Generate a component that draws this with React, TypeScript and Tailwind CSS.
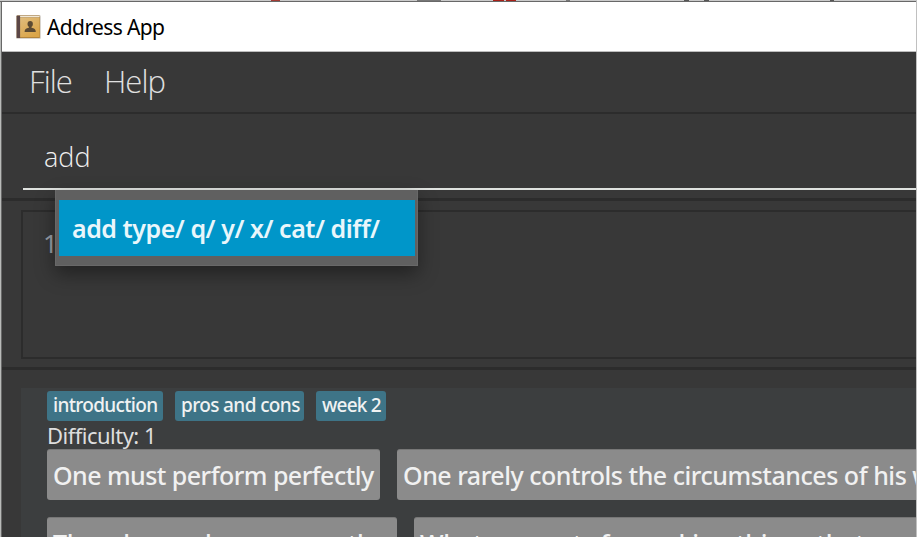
import React from "react";

function BookIcon() {
  return (
    <svg className="block h-6 w-[25px]" viewBox="0 0 25 24">
      <defs>
        <linearGradient id="cover" x1="0" y1="0" x2="0.6" y2="1">
          <stop offset="0" stopColor="#e0bd7e" />
          <stop offset="1" stopColor="#dba548" />
        </linearGradient>
      </defs>
      <rect x="0" y="0" width="25" height="24" rx="1.5" fill="#d9d5cf" />
      <rect x="0.7" y="0.5" width="23.3" height="22.5" rx="0.8" fill="#a97c38" />
      <rect x="4" y="1" width="19.6" height="1.4" fill="#f1e8d6" />
      <rect x="4" y="2.8" width="19.6" height="19.4" fill="url(#cover)" />
      <rect x="0.7" y="0.7" width="3.4" height="22.3" fill="#5b4646" />
      <ellipse cx="14.2" cy="9" rx="2.7" ry="3" fill="#5b4a33" />
      <path d="M12.9 10.5h2.6v2.3c2.9.7 4.3 1.4 4.3 4.200H8.600c0-2.800 1.400-3.500 4.300-4.200z" fill="#5b4a33" />
    </svg>
  );
}

function Tag({ children, className }: { children: React.ReactNode; className: string }) {
  return (
    <span className={`h-[30px] shrink-0 rounded-[3px] bg-[#3e7487] pl-[6px] text-[19px] font-medium leading-[29px] text-[#f0f2f2] ${className}`}>
      {children}
    </span>
  );
}

function Answer({ children, className }: { children: React.ReactNode; className: string }) {
  return (
    <div className={`h-[51px] shrink-0 rounded-[3px] border-t border-[#777] bg-[#8b8b8b] pl-[6px] text-[25px] font-medium leading-[51px] text-[#f1f1f1] ${className}`}>
      {children}
    </div>
  );
}

export default function App() {
  return (
    <div className="flex h-[537px] w-[917px] flex-col overflow-hidden whitespace-nowrap border-r border-[#c0c0c0] bg-[#383838] font-['Noto_Sans','Open_Sans',sans-serif]">
      <div className="flex h-[2px] shrink-0 border-b border-[#686868] bg-[#cacaca]">
        <i className="ml-[271px] h-px w-[9px] bg-[#a33c35]" />
        <i className="ml-[137px] h-px w-[24px] bg-[#777]" />
        <i className="ml-[52px] h-px w-[11px] bg-[#a82018]" />
        <i className="ml-[2px] h-px w-[10px] bg-[#a82018]" />
        <i className="ml-[50px] h-px w-[4px] bg-[#777]" />
        <i className="ml-[114px] h-px w-[5px] bg-[#555]" />
        <i className="ml-[15px] h-px w-[5px] bg-[#555]" />
        <i className="ml-[121px] h-px w-[4px] bg-[#555]" />
      </div>
      <div className="flex min-h-0 flex-1 border-l border-[#b9bbb9]">
        <div className="flex w-full flex-col border-l border-[#686868]">
          <header className="flex h-[50px] shrink-0 items-center border-b border-[#bdbdbd] bg-white pl-[14px] text-black">
            <BookIcon />
            <span className="ml-[6px] mt-[3px] text-[21px] tracking-[-0.62px]">Address App</span>
          </header>
          <nav className="flex h-[62px] shrink-0 items-center border-b-2 border-[#2c2c2c] pb-[2px] pl-[27px] font-['Open_Sans'] text-[31px] font-light tracking-[-0.95px] text-[#e0e0e0]">
            <span className="w-[75px]">File</span>
            <span>Help</span>
          </nav>
          <section className="relative z-10 h-[84px] shrink-0 pl-[21px]">
            <div className="h-[76px] border-b-2 border-[#dfe2df] pl-[21px] pt-[19px] font-['Open_Sans'] text-[27px] font-light leading-[48px] text-[#f0f0f0]">
              add
            </div>
            <div className="absolute left-[53px] top-[76px] h-[76px] w-[363px] border border-t-0 border-[#686868] bg-[#606060] px-[2px] pt-[10px] shadow-[0_8px_18px_rgba(0,0,0,0.4)]">
              <div className="ml-px h-[56px] bg-[#0096c9] pl-[13px] text-[25px] font-semibold leading-[56px] tracking-[-0.46px] text-[#e9f6fb]">
                add type/ q/ y/ x/ cat/ diff/
              </div>
            </div>
          </section>
          <section className="h-[172px] shrink-0 border-b-[3px] border-t-[3px] border-[#2c2c2c] pl-[19px] pt-[9px]">
            <div className="h-[149px] border-2 border-r-0 border-[#2c2c2c] pl-[20px] pt-[7px] text-[26px] leading-[48px] text-[#999fa8]">
              1
            </div>
          </section>
          <main className="min-h-0 flex-1 pl-[19px] pt-[18px]">
            <div className="h-full bg-[#3c3e3f] pl-[26px] pt-[3px]">
              <div className="flex gap-[12px]">
                <Tag className="w-[116px] tracking-[-0.68px]">introduction</Tag>
                <Tag className="w-[129px] tracking-[-0.62px]">pros and cons</Tag>
                <Tag className="w-[70px] tracking-[-0.8px]">week 2</Tag>
              </div>
              <div className="h-[28px] text-[22px] leading-[29px] tracking-[-0.52px] text-[#dedede]">Difficulty: 1</div>
              <div className="flex gap-[17px] overflow-hidden">
                <Answer className="w-[333px] tracking-[-0.54px]">One must perform perfectly</Answer>
                <Answer className="w-[620px] tracking-[-0.47px]">One rarely controls the circumstances of his work</Answer>
              </div>
              <div className="mt-[17px] flex gap-[17px] overflow-hidden">
                <Answer className="w-[350px] tracking-[-0.36px]">They demand more once there</Answer>
                <Answer className="w-[620px] tracking-[-0.2px]">What accounts for making things that are</Answer>
              </div>
            </div>
          </main>
        </div>
      </div>
    </div>
  );
}
